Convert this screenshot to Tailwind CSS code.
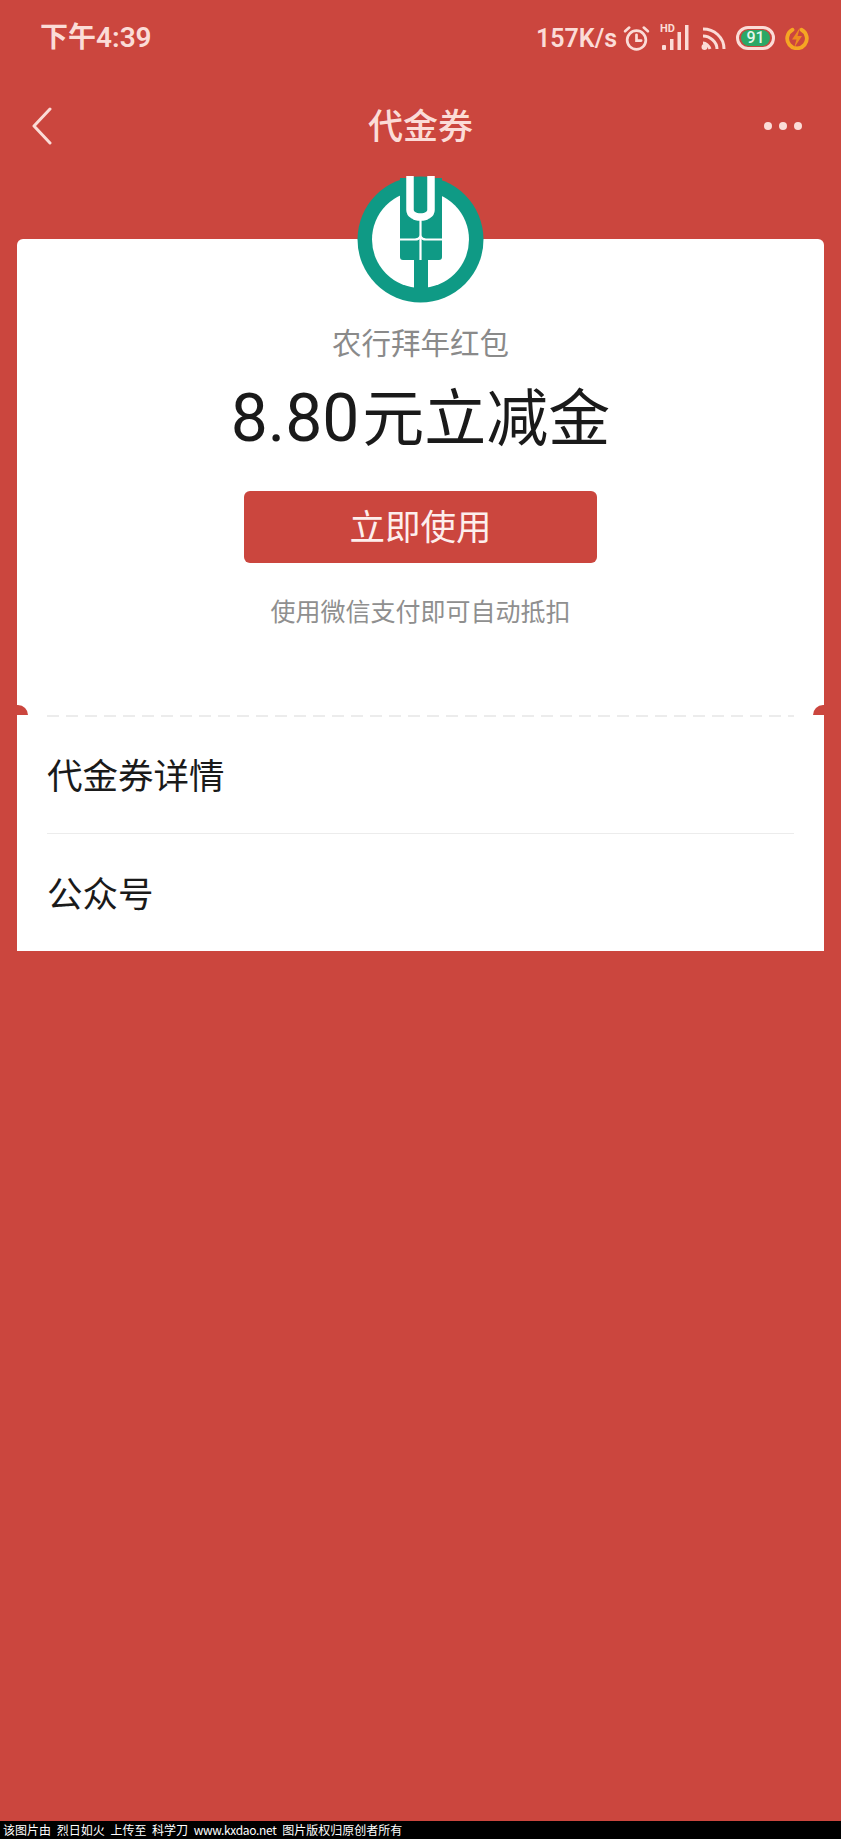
<!DOCTYPE html>
<html lang="zh-CN">
<head>
  <meta charset="UTF-8">
  <script src="https://cdn.jsdelivr.net/npm/@tailwindcss/browser@4"></script>
</head>
<body class="m-0 bg-[#cb463e]">
  <div class="flex flex-col w-[841px] h-[1839px] overflow-hidden bg-[#cb463e] font-['Roboto','Noto_Sans_CJK_SC',sans-serif]">

    <!-- status bar -->
    <div class="flex items-center justify-between h-[76px] pl-[40px] pr-[32px] text-[#fbdcd7] font-semibold shrink-0">
      <span class="text-[28px] leading-none">下午4:39</span>
      <div class="flex items-center">
        <span class="text-[25px] leading-none">157K/s</span>
        <svg class="ml-[6px]" width="27" height="27" viewBox="0 0 26 26" fill="none" stroke="#fbdcd7" stroke-width="2.6" stroke-linecap="round">
          <circle cx="13" cy="14.500" r="9"/><path d="M13 9.500v5.500h4.500"/><path d="M2 6l4-3.500M24 6l-4-3.500"/>
        </svg>
        <div class="relative w-[30px] h-[28px] ml-[10px]">
          <span class="absolute left-0 top-[-1px] text-[11px] leading-none font-bold">HD</span>
          <svg class="absolute left-0 top-0" width="30" height="28" viewBox="0 0 30 28" fill="#fbdcd7">
            <rect x="2" y="21" width="4" height="5" rx="1"/><rect x="10" y="15" width="3.500" height="11"/><rect x="17.500" y="8" width="3.500" height="18"/><rect x="25" y="1" width="3.500" height="25"/>
          </svg>
        </div>
        <svg class="ml-[11px]" width="25" height="24" viewBox="0 0 25 24" fill="none" stroke="#fbdcd7" stroke-width="3">
          <path d="M2 3c11 0 21 8 21 20"/><path d="M2 10c7 0 14 6 14 13"/><path d="M2 17c3 0 6 3 7 6"/><circle cx="3.500" cy="21" r="1.500" fill="#fbdcd7"/>
        </svg>
        <div class="flex items-center justify-center ml-[10px] w-[39px] h-[24px] rounded-full border-[3px] border-[#fbdcd7]">
          <span class="flex items-center justify-center w-[29px] h-[16px] rounded-full bg-[#2ba866] text-[16px] font-medium leading-none text-[#e6f7ec]">91</span>
        </div>
        <svg class="ml-[10px]" width="24" height="24" viewBox="0 0 24 24" fill="none">
          <path d="M7.500 3.800a9.800 9.800 0 1 0 9 0" stroke="#f5a623" stroke-width="3.800" stroke-linecap="round"/>
          <path d="M15 1.500L7 13.500h4.500L9 22l8-12h-4.500z" fill="#ee8a1f"/>
        </svg>
      </div>
    </div>

    <!-- nav bar -->
    <div class="relative flex items-center justify-between h-[100px] pl-[31px] pr-[39px] shrink-0">
      <svg width="22" height="38" viewBox="0 0 22 38" fill="none" stroke="#fbdcd7" stroke-width="3" stroke-linecap="round" stroke-linejoin="round">
        <path d="M19 2L3 19l16 17"/>
      </svg>
      <span class="absolute inset-x-0 pt-[2px] text-center text-[35px] leading-none font-medium text-[#fbdcd7]">代金券</span>
      <div class="flex gap-[7px]">
        <span class="w-[8px] h-[8px] rounded-full bg-[#fbdcd7]"></span>
        <span class="w-[8px] h-[8px] rounded-full bg-[#fbdcd7]"></span>
        <span class="w-[8px] h-[8px] rounded-full bg-[#fbdcd7]"></span>
      </div>
    </div>

    <!-- card -->
    <div class="relative mt-[63px] mx-[17px] h-[712px] bg-white rounded-t-[6px] flex flex-col shrink-0">
      <!-- ABC logo over card edge -->
      <svg class="absolute left-[340px] top-[-63px]" width="127" height="127" viewBox="0 0 127 127">
        <circle cx="63.500" cy="63.500" r="63" fill="#0f9a85"/>
        <circle cx="63.500" cy="63.500" r="48.500" fill="#fff"/>
        <!-- stem and wheat block -->
        <path d="M43 2h42v79q0 3-3 3H71v38H57V84H46q-3 0-3-3z" fill="#0f9a85"/>
        <!-- white fork -->
        <path d="M53 0V34q0 3 3 5l2 1q1 1 5.500 1t5.500-1l2-1q3-2 3-5V0" fill="none" stroke="#fff" stroke-width="7.500"/>
        <!-- thin grain lines -->
        <path d="M63.500 42v42" fill="none" stroke="#fff" stroke-width="2.200"/>
        <path d="M43 63.500h15q4 0 5.500-3q1.500 3 5.500 3h16" fill="none" stroke="#fff" stroke-width="2.200"/>
      </svg>

      <div class="flex flex-col items-center pt-[85px]">
        <p class="text-[29.500px] leading-[40px] text-[#8a8a8a]">农行拜年红包</p>
        <p class="mt-[15px] h-[80px] text-[62px] leading-[80px] text-[#1a1a1a]"><span class="text-[66px] mr-[3px]">8.80</span>元立减金</p>
        <button class="flex items-center justify-center mt-[32px] pt-[4px] w-[353px] h-[72px] rounded-[6px] bg-[#cb463e] text-[35.500px] text-[#fdeeec]">立即使用</button>
        <p class="mt-[32px] text-[25px] leading-[36px] text-[#8f8f8f]">使用微信支付即可自动抵扣</p>
      </div>

      <!-- perforation -->
      <div class="absolute left-0 top-[466px] w-[11px] h-[10px] rounded-tr-full bg-[#cb463e]"></div>
      <div class="absolute right-0 top-[466px] w-[11px] h-[10px] rounded-tl-full bg-[#cb463e]"></div>

      <div class="mt-auto mx-[30px]">
        <div class="h-[2px] bg-[repeating-linear-gradient(90deg,#ececec_0,#ececec_12px,transparent_12px,transparent_19px)]"></div>
        <div class="h-[116px] pt-[6px] flex items-center">
          <span class="text-[35.500px] leading-none text-[#1a1a1a]">代金券详情</span>
        </div>
        <div class="border-t border-[#ececec] h-[118px] pt-[6px] flex items-center">
          <span class="text-[35.500px] leading-none text-[#1a1a1a]">公众号</span>
        </div>
      </div>
    </div>

    <!-- watermark strip -->
    <div class="mt-auto flex items-center h-[18px] pl-[3px] bg-black text-white text-[12px] leading-none whitespace-pre [word-spacing:3px] font-['Noto_Sans_CJK_SC','Liberation_Sans',sans-serif]">该图片由 烈日如火 上传至 科学刀 <span class="tracking-[-0.33px]">www.kxdao.net</span> 图片版权归原创者所有</div>
  </div>
</body>
</html>
